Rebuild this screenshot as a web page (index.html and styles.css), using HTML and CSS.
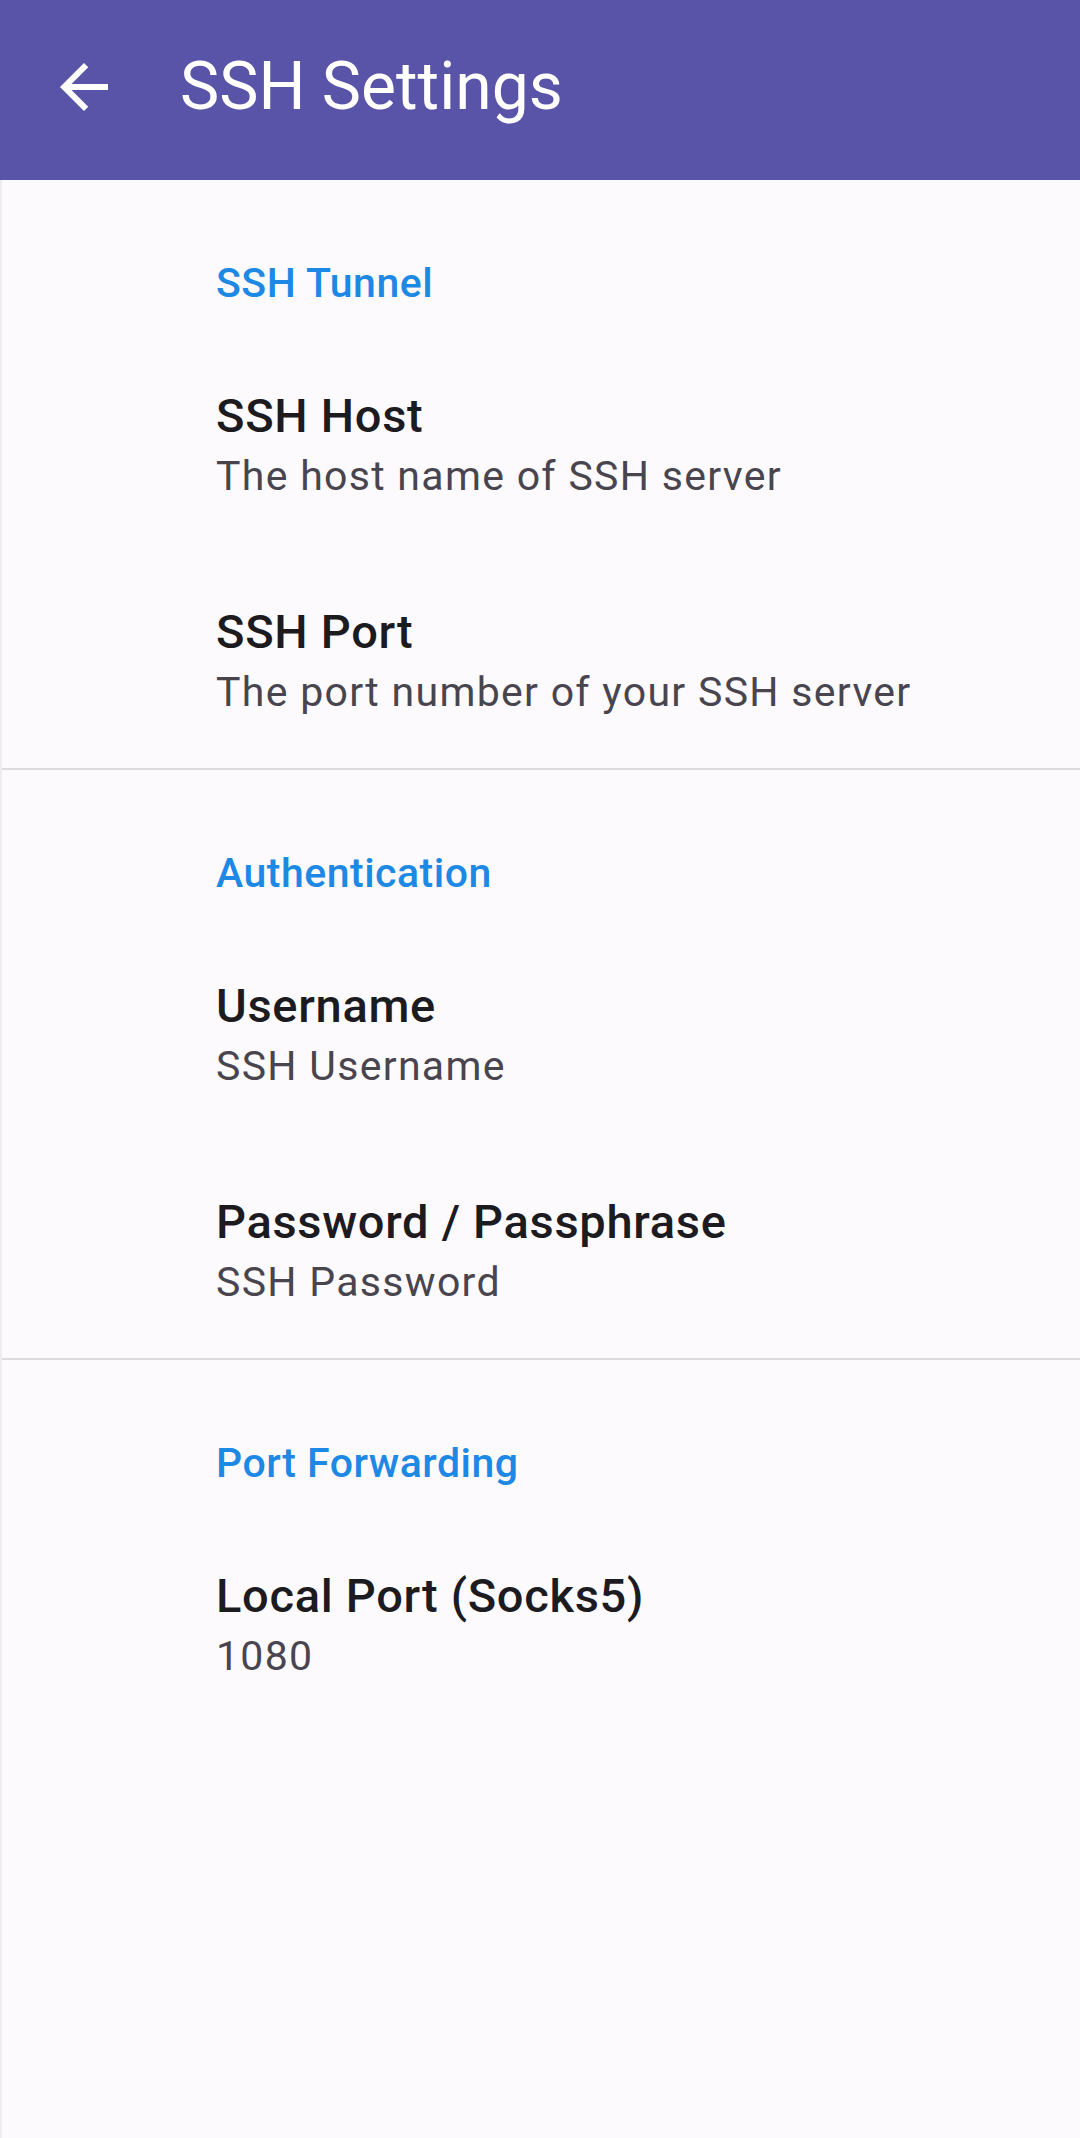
FILE: index.html
```html
<!DOCTYPE html>
<html lang="en">
<head>
  <meta charset="UTF-8">
  <meta name="viewport" content="width=device-width, initial-scale=1.0">
  <title>SSH Settings</title>
  <link rel="stylesheet" href="styles.css">
</head>
<body>
  <div class="toolbar">
    <svg class="back" viewBox="0 0 24 24" width="72" height="72">
      <path d="M20 11H7.83l5.59-5.59L12 4l-8 8 8 8 1.41-1.41L7.83 13H20v-2z" fill="#fff"/>
    </svg>
    <h1>SSH Settings</h1>
  </div>

  <div class="prefs">
    <div class="section">
      <div class="category">SSH Tunnel</div>
      <div class="pref">
        <div class="pref-title">SSH Host</div>
        <div class="pref-summary">The host name of SSH server</div>
      </div>
      <div class="pref">
        <div class="pref-title">SSH Port</div>
        <div class="pref-summary">The port number of your SSH server</div>
      </div>
    </div>

    <div class="section">
      <div class="category">Authentication</div>
      <div class="pref">
        <div class="pref-title">Username</div>
        <div class="pref-summary">SSH Username</div>
      </div>
      <div class="pref">
        <div class="pref-title">Password / Passphrase</div>
        <div class="pref-summary">SSH Password</div>
      </div>
    </div>

    <div class="section">
      <div class="category">Port Forwarding</div>
      <div class="pref">
        <div class="pref-title">Local Port (Socks5)</div>
        <div class="pref-summary">1080</div>
      </div>
    </div>
  </div>
</body>
</html>
```

FILE: styles.css
```css
body {
  margin: 0;
  font-family: Roboto, "Noto Sans", sans-serif;
  background-color: #fcfafd;
  min-height: 2138px;
}
.toolbar {
  display: flex;
  align-items: center;
  height: 180px;
  padding: 0 0 6px 48px;
  box-sizing: border-box;
  background-color: #5a54a9;
}
.back {
  flex: none;
  margin-right: 60px;
}
.toolbar h1 {
  margin: 0;
  font-size: 66px;
  font-weight: 400;
  line-height: 80px;
  color: #fff;
}
.prefs {
  border-left: 2px solid #efecf0;
  min-height: 1958px;
}
.section {
  padding: 79px 0 0 214px;
}
.section + .section {
  border-top: 2px solid #dedbdf;
}
.category {
  font-size: 41px;
  font-weight: 500;
  line-height: 48px;
  letter-spacing: 0.5px;
  color: #1e88e5;
  margin-bottom: 29px;
}
.pref {
  padding: 52px 0 44px;
}
.pref-title {
  font-size: 47px;
  font-weight: 500;
  line-height: 56px;
  letter-spacing: 0.7px;
  color: #1c1b1f;
}
.pref-summary {
  font-size: 41px;
  line-height: 64px;
  letter-spacing: 1.3px;
  color: #49454f;
}
```
